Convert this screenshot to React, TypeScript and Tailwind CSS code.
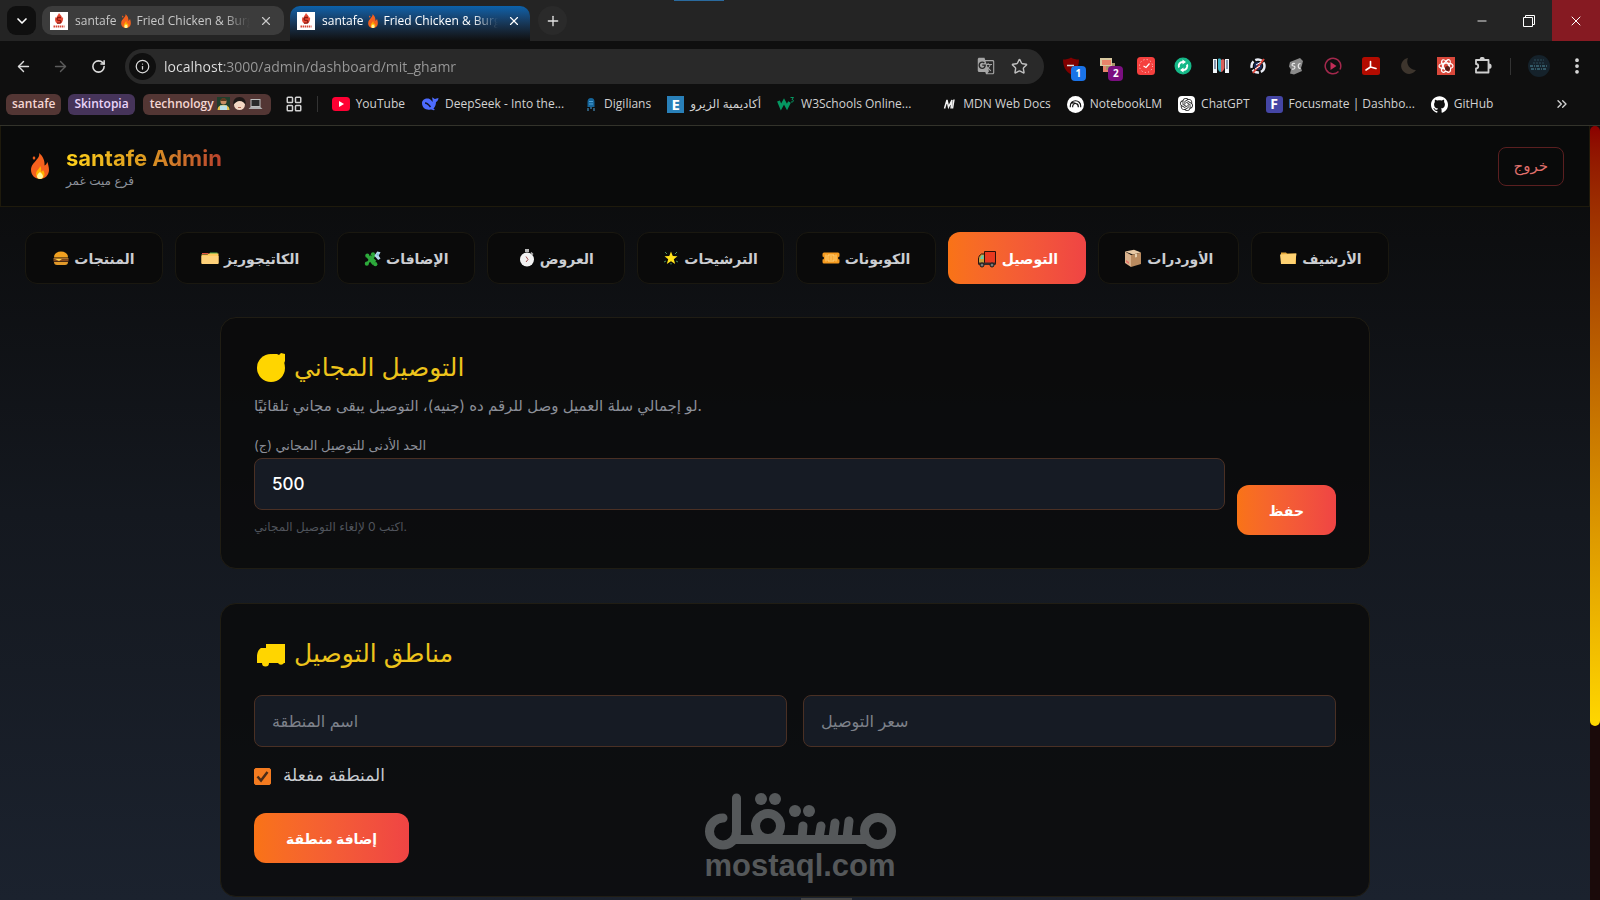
import { useState, type ReactNode } from "react";
import {
  ArrowLeft,
  ArrowRight,
  ChevronDown,
  ChevronsRight,
  EllipsisVertical,
  Info,
  LayoutGrid,
  Minus,
  Plus,
  RotateCw,
  Star,
  X,
} from "lucide-react";
import { SiGithub, SiOpenai } from "react-icons/si";
import { MdGTranslate } from "react-icons/md";

type IconProps = { className?: string };

function Fire({ className }: IconProps) {
  return (
    <svg viewBox="0 0 20 26" className={className} aria-hidden="true">
      <path
        d="M9 0c1 3-1 5-3 7.500C4.500 9.500 1 12 1 17c0 5 4 9 9 9s9-4 9-9c0-3-1-6-1.500-8-1 2-1.500 3-3 3.500C15 8 13 3 9 0z"
        fill="#f4611e"
      />
      <path d="M4 3l1.500 2L4 7 2.500 5z" fill="#f4611e" />
      <path d="M10 13c0 3-4 4-4 8 0 3 2 5 4 5s4.500-2 4.500-5c0-2-1-3-1.500-4-.5 1-1 1.500-2 1.500.5-3 0-4-1-5.500z" fill="#ffb300" />
      <path d="M10 19c-1.500 1.500-3 2.500-3 4.500C7 25 8.500 26 10 26s3-1 3-2.500c0-2-1.500-3-3-4.500z" fill="#fff59d" />
    </svg>
  );
}

function SantafeFavicon() {
  return (
    <svg viewBox="0 0 18 18" className="size-[18px] shrink-0" aria-hidden="true">
      <rect width="18" height="18" fill="#fff" />
      <path d="M9 1c1 2 3 2.500 3 5l1-1c.5 3-.5 5-2 6.500H7C5 10 4.500 8 5.500 5l1 1C6.500 4 8.500 3 9 1z" fill="#e64a35" />
      <path d="M11 5.500H8.500a1.400 1.400 0 0 0 0 2.800h1a1.400 1.400 0 0 1 0 2.800H7" fill="none" stroke="#8c1c13" strokeWidth="1.300" />
      <path d="M3.500 14.500h11" stroke="#d64535" strokeWidth="2" strokeDasharray="1.500 .6" />
    </svg>
  );
}

function Burger() {
  return (
    <svg viewBox="0 0 16 16" className="size-4" aria-hidden="true">
      <path d="M1 7.500C1 3.500 4 1.500 8 1.500s7 2 7 6z" fill="#f0a020" />
      <path d="M.5 8h15v1.500H.5z" fill="#a8702c" />
      <path d="M.5 9.300h15v2.200H.5z" fill="#8a4b1c" />
      <path d="M2 9l4 2 3-2z" fill="#ffd54a" />
      <path d="M1 12h14c0 2-1 3-3 3H4c-2 0-3-1-3-3z" fill="#e39a2a" />
    </svg>
  );
}

function Dividers() {
  return (
    <svg viewBox="0 0 18 16" className="h-4 w-[18px]" aria-hidden="true">
      <path d="M1 3h6l1 1H1z" fill="#e5533d" />
      <path d="M9 2.500h7.500V5H8z" fill="#57b04a" />
      <path d="M.5 4.500h6l1.500-1h9.500V13a1 1 0 0 1-1 1h-15a1 1 0 0 1-1-1z" fill="#ffca5c" />
      <path d="M.5 6h17v7a1 1 0 0 1-1 1h-15a1 1 0 0 1-1-1z" fill="#ffd27a" />
    </svg>
  );
}

function Puzzle() {
  return (
    <svg viewBox="0 0 18 18" className="size-[17px]" aria-hidden="true">
      <g fill="#2eaa3c">
        <path d="M3 8l4-2.500 6 6L9 16z" />
        <circle cx="3.500" cy="6" r="2.200" />
        <circle cx="9.500" cy="4.500" r="2.200" />
        <circle cx="3" cy="14.500" r="2.200" />
        <circle cx="12" cy="15" r="2.200" />
        <path d="M3 5l9 10-1 1-9-9zM10 4L2 14l2 1 8-8z" />
      </g>
      <path d="M11 6l3-4.500 3.500 1-2 3.500 2 3-2.500 1.500z" fill="#b7d9ee" />
      <circle cx="14.500" cy="5" r="1.200" fill="#7fb6d8" />
    </svg>
  );
}

function Stopwatch() {
  return (
    <svg viewBox="0 0 16 18" className="h-[18px] w-4" aria-hidden="true">
      <path d="M6 0h4v3H6z" fill="#b8b8b8" />
      <path d="M12.500 3l2 2-1 1-2-2z" fill="#b8b8b8" />
      <circle cx="8" cy="10.500" r="7" fill="#f2f2f2" />
      <path d="M7 7.500l2 3-2 2.500" fill="none" stroke="#a04a4a" />
    </svg>
  );
}

function GlowStar() {
  return (
    <svg viewBox="0 0 16 16" className="size-4" aria-hidden="true">
      <path d="M2 2l2 2M14 2l-2 2M1 12l2-1M15 12l-2-1M8 14.500V13" stroke="#4a8f5a" />
      <path d="M8 1.500l1.800 4.600 4.700.1-3.700 3 1.400 4.800L8 11.200 3.800 14l1.400-4.800-3.700-3 4.700-.1z" fill="#ffe11a" />
    </svg>
  );
}

function Ticket() {
  return (
    <svg viewBox="0 0 18 12" className="h-3 w-[18px]" aria-hidden="true">
      <path d="M2 .5h14A1.500 1.500 0 0 1 17.500 2v2.500a1.500 1.500 0 0 0 0 3V10a1.500 1.500 0 0 1-1.500 1.500H2A1.500 1.500 0 0 1 .5 10V7.500a1.500 1.500 0 0 0 0-3V2A1.500 1.500 0 0 1 2 .5z" fill="#f59a1f" />
      <path d="M4 2.500v7M14 2.500v7" stroke="#ffd27a" />
      <path d="M6 3h6v6H6zM7.500 5h3M7.500 7h3" fill="none" stroke="#ffd27a" />
    </svg>
  );
}

function Truck() {
  return (
    <svg viewBox="0 0 20 20" className="size-5" aria-hidden="true">
      <path d="M7.500 3.500h11V16h-11z" fill="#e8381f" stroke="#2a0f0a" />
      <path d="M7.500 6H4.500C2.500 7 1.500 9 1.500 11v5h6z" fill="#c9a13a" stroke="#2a0f0a" />
      <path d="M6.500 7.300H4.800L3 11h3.500z" fill="#64c8b0" />
      <path d="M1.500 14.500h17V17h-17z" fill="#3a2a28" />
      <circle cx="5" cy="17" r="2" fill="#777" stroke="#1a1a1a" />
      <circle cx="15" cy="17" r="2" fill="#777" stroke="#1a1a1a" />
    </svg>
  );
}

function Parcel() {
  return (
    <svg viewBox="0 0 18 18" className="size-[18px]" aria-hidden="true">
      <path d="M1 2.500L10 .8l7 2.700-8 2z" fill="#e8c9a4" />
      <path d="M1 2.500l6 3.500v12l-6-4z" fill="#d9b28c" />
      <path d="M7 6l10-2.500V15L7 18z" fill="#b98a5e" />
      <path d="M11 5l2-.5V8l-2 .6z" fill="#e6cfae" />
      <path d="M2 11l3 2v2l-3-2z" fill="#e5736a" />
    </svg>
  );
}

function Folder() {
  return (
    <svg viewBox="0 0 18 16" className="h-4 w-[18px]" aria-hidden="true">
      <path d="M2 2.500h5l1 1h9V14H2z" fill="#e6a93a" />
      <path d="M1 4.500L17.500 3.500 16 14H2z" fill="#ffd272" />
    </svg>
  );
}

function TechFaces() {
  return (
    <svg viewBox="0 0 48 14" className="h-[14px] w-12" aria-hidden="true">
      <rect x="1" width="13" height="13" fill="#1f3d2c" />
      <circle cx="7.500" cy="4.500" r="3" fill="#c98d63" />
      <path d="M4.500 4a3 3 0 0 1 6 0z" fill="#5a3920" />
      <path d="M1.500 13c0-3 2-5 6-5s6 2 6 5z" fill="#e9c04e" />
      <path d="M4 8.500h7V13H4z" fill="#b8e0e8" />
      <circle cx="23.500" cy="7.500" r="5.500" fill="#f3d7c4" />
      <path d="M17.500 8c-1-5 2-8 6-8s7 3 6 8c-1-2-3-4-6-4-2 0-5 2-6 4z" fill="#1d1716" />
      <path d="M22 10.500h3" stroke="#b06a5a" />
      <rect x="35" y="2.500" width="9" height="7" fill="#2a2a2a" stroke="#bdbdbd" />
      <path d="M32.500 12h14l-2-2H34.500z" fill="#b0b0b0" />
    </svg>
  );
}

// Extension icons shown on the right of the address bar
const extensions: { name: string; icon: ReactNode; badge?: string; badgeClass?: string }[] = [
  {
    name: "Ad blocker",
    badge: "1",
    badgeClass: "bg-[#1a73e8]",
    icon: (
      <svg viewBox="0 0 18 18" className="size-[18px]">
        <path d="M9 .5C11 2 14 2.500 17 2.500 17 10 14 14.500 9 17.500 4 14.500 1 10 1 2.500 4 2.500 7 2 9 .5z" fill="#800000" />
        <path d="M5 8.500h7" stroke="#ddd" strokeWidth="1.500" />
      </svg>
    ),
  },
  {
    name: "Page marker",
    badge: "2",
    badgeClass: "bg-[#7b0f80]",
    icon: (
      <svg viewBox="0 0 18 18" className="size-[18px]">
        <path d="M1 1h12v8H1z" fill="#d9c9a0" />
        <path d="M3 3h9v5H3z" fill="#e8836a" />
        <path d="M4 9h5v6H4z" fill="#e8836a" />
        <path d="M7 9h5v4H7zM13 6h3v4h-3z" fill="#a8946a" />
      </svg>
    ),
  },
  {
    name: "Task clock",
    icon: (
      <svg viewBox="0 0 18 18" className="size-[18px]">
        <rect width="18" height="18" rx="3.500" fill="#f5403e" />
        <circle cx="9" cy="9" r="6.500" fill="none" stroke="#ffd9d4" strokeDasharray="1 2.400" />
        <path d="M6.500 9L9 10.500l3.500-4" fill="none" stroke="#fff" strokeWidth="1.200" />
      </svg>
    ),
  },
  {
    name: "Sync",
    icon: (
      <svg viewBox="0 0 18 18" className="size-[18px]">
        <circle cx="9" cy="9" r="8.500" fill="#15b888" />
        <path d="M5 10.500a4 4 0 0 1 4-5.500M13 7.500A4 4 0 0 1 9 13" fill="none" stroke="#fff" strokeWidth="2" />
        <path d="M8.500 2.500L12 5 8.500 7.500zM9.500 15.500L6 13l3.500-2.500z" fill="#fff" />
      </svg>
    ),
  },
  {
    name: "Meeting helper",
    icon: (
      <svg viewBox="0 0 18 18" className="size-[18px]">
        <path d="M1 2h4v14H1zM13 2h4v14h-4z" fill="#f2f6fa" />
        <path d="M3 3v9M15 3v9" stroke="#1d3a6a" />
        <path d="M6 2c2-1 3 0 3 1v12c-2 0-3-2-3-4z" fill="#3fb6c9" />
        <path d="M9 3c1-1 3-1 3.500 0v8c-.5 2-2 4-3.500 4z" fill="#d9605c" />
      </svg>
    ),
  },
  {
    name: "Color picker",
    icon: (
      <svg viewBox="0 0 18 18" className="size-[18px]">
        <circle cx="9" cy="9" r="6.500" fill="none" stroke="#e9ecf5" strokeWidth="2.500" strokeDasharray="7 2" />
        <circle cx="9" cy="9" r="4" fill="#1b2b5c" />
        <path d="M15 2L4 16" stroke="#e0463a" strokeWidth="2" />
        <path d="M7 8l5-3M6 12l5-3" stroke="#fff" />
      </svg>
    ),
  },
  {
    name: "Scribe",
    icon: (
      <svg viewBox="0 0 18 18" className="size-[18px]">
        <path d="M3 5l10-4 3 3-1 4-1 3 1 3-8 3.500-4-1 1-4-2-3z" fill="#8a8a8a" />
        <path d="M8 6.500c-3-1-4 2.500-1.500 2.500S8 13 5 12M13.500 6.500c-3 0-3 5 0 5" fill="none" stroke="#e8e8e8" strokeWidth="1.200" />
      </svg>
    ),
  },
  {
    name: "Video speed",
    icon: (
      <svg viewBox="0 0 18 18" className="size-[18px]">
        <path d="M14.500 14.500A7.800 7.800 0 1 1 16.800 9c0 1.500-.3 2.500-.8 3.500" fill="none" stroke="#a3284c" strokeWidth="1.500" />
        <path d="M6.500 5l6 4-6 4z" fill="#c22d57" />
      </svg>
    ),
  },
  {
    name: "PDF reader",
    icon: (
      <svg viewBox="0 0 18 18" className="size-[18px]">
        <rect width="18" height="18" rx="2.500" fill="#b30b00" />
        <path d="M4 13l4.500-3V4.500M8.500 4.500V10l5.500 1.500M8.500 10l5.500 1.500" fill="none" stroke="#fff" strokeWidth="1.600" strokeLinecap="round" />
      </svg>
    ),
  },
  {
    name: "Dark mode",
    icon: (
      <svg viewBox="0 0 18 18" className="size-[18px]">
        <path d="M9 1a8 8 0 1 0 8 12A8.500 8.500 0 0 1 9 1z" fill="#3d352d" />
      </svg>
    ),
  },
  {
    name: "React tools",
    icon: (
      <svg viewBox="0 0 18 18" className="size-[18px]">
        <rect width="18" height="18" fill="#d9483b" />
        <g fill="none" stroke="#fff" strokeWidth="1.200">
          <ellipse cx="9" cy="9" rx="7" ry="2.800" />
          <ellipse cx="9" cy="9" rx="7" ry="2.800" transform="rotate(60 9 9)" />
          <ellipse cx="9" cy="9" rx="7" ry="2.800" transform="rotate(120 9 9)" />
        </g>
        <circle cx="10.500" cy="11.500" r="2.500" fill="#5a1c16" />
      </svg>
    ),
  },
  {
    name: "Extensions",
    icon: (
      <svg viewBox="0 0 18 18" className="size-[18px]" fill="none" stroke="#cfcfcf" strokeWidth="1.800" strokeLinejoin="round">
        <path d="M2 3h12.500v12.500H2v-4a2.200 2.200 0 0 0 0-4.500z" />
        <path d="M6.500 2.500a1.700 1.700 0 0 1 3.400 0zM15 7.500a1.700 1.700 0 0 1 0 3.400z" fill="#cfcfcf" />
      </svg>
    ),
  },
];

const bookmarks: { label: string; icon: ReactNode; className?: string }[] = [
  {
    label: "YouTube",
    icon: (
      <svg viewBox="0 0 18 14" className="h-[14px] w-[18px]">
        <rect width="18" height="14" rx="3.500" fill="#ff0033" />
        <path d="M7 4l5 3-5 3z" fill="#fff" />
      </svg>
    ),
  },
  {
    label: "DeepSeek - Into the...",
    icon: (
      <svg viewBox="0 0 18 16" className="h-4 w-[18px]">
        <path
          d="M1 7c0-3 3-5 6.500-4.500 1.500.2 3 2 4 3.500.3-1.500 0-3-.5-4.500 1.500.3 2 1.500 3 1.500s2-1 3.500-1c-.3 2-1 3.500-2.500 4 0 3-1 5-2.500 6.500l1.500 1.500c-2 .5-3-.5-4.500-.5C5 14.500 1 12 1 7z"
          fill="#4d6bfe"
        />
        <path d="M4 7c2 0 4 2 5.500 4" fill="none" stroke="#12142a" strokeWidth="1.500" />
      </svg>
    ),
  },
  {
    label: "Digilians",
    className: "ml-1",
    icon: (
      <svg viewBox="0 0 14 16" className="h-4 w-[14px]">
        <path d="M3.500 6a3.500 4 0 0 1 7 0v5h-7z" fill="#15659a" />
        <path d="M4 12v3M7 11v2M10 12v3M5 5.500h4M5 8h4" stroke="#4fa3d8" strokeWidth="1" />
      </svg>
    ),
  },
  {
    label: "أكاديمية الزيرو",
    icon: (
      <span className="flex size-[17px] items-center justify-center bg-[#2980b9] text-[15px] leading-none font-bold text-white">E</span>
    ),
  },
  {
    label: "W3Schools Online...",
    icon: (
      <svg viewBox="0 0 18 16" className="h-4 w-[18px]">
        <path d="M1.500 5l2.500 6 3-5.500 3 5.500 2.500-5" fill="none" stroke="#059862" strokeWidth="3" />
        <path d="M13.500 1.500h3l-1.500 2c2 0 2 3-1 2.500" fill="none" stroke="#059862" />
      </svg>
    ),
  },
  {
    label: "MDN Web Docs",
    className: "ml-[14px]",
    icon: (
      <svg viewBox="0 0 16 16" className="size-4">
        <path d="M3.500 12.500L6 4l1.500 7L11 4l-1 8.500M13 3.500l-1.500 9" fill="none" stroke="#f2f2f2" strokeWidth="1.500" />
      </svg>
    ),
  },
  {
    label: "NotebookLM",
    icon: (
      <svg viewBox="0 0 18 18" className="size-[17px]">
        <circle cx="9" cy="9" r="9" fill="#fff" />
        <path d="M3.500 12V10.500a5.500 5.500 0 0 1 11 0V12M6 12v-1a3 3 0 0 1 6 0v1M4.500 7.500c4-1 7.500 1 7.500 4.500" fill="none" stroke="#111" strokeWidth="1.200" />
      </svg>
    ),
  },
  {
    label: "ChatGPT",
    icon: (
      <span className="flex size-[17px] items-center justify-center rounded-[4px] bg-white text-[#222]">
        <SiOpenai className="size-[13px]" />
      </span>
    ),
  },
  {
    label: "Focusmate | Dashbo...",
    icon: (
      <span className="flex size-[17px] items-center justify-center rounded-[3px] bg-[#4546a5] text-[14px] leading-none font-bold text-white">F</span>
    ),
  },
  { label: "GitHub", icon: <SiGithub className="size-[17px] text-white" /> },
];

const sections = [
  { id: "products", label: "المنتجات", icon: <Burger /> },
  { id: "categories", label: "الكاتيجوريز", icon: <Dividers /> },
  { id: "addons", label: "الإضافات", icon: <Puzzle /> },
  { id: "offers", label: "العروض", icon: <Stopwatch /> },
  { id: "picks", label: "الترشيحات", icon: <GlowStar /> },
  { id: "coupons", label: "الكوبونات", icon: <Ticket /> },
  { id: "delivery", label: "التوصيل", icon: <Truck /> },
  { id: "orders", label: "الأوردرات", icon: <Parcel /> },
  { id: "archive", label: "الأرشيف", icon: <Folder /> },
];

function BrowserTab({ active = false }: { active?: boolean }) {
  return (
    <div
      className={
        active
          ? "flex h-[35px] w-[240px] items-center rounded-t-[10px] bg-linear-to-b from-[#0a62ab] to-[#0f0f0f] pr-1.5 pb-1.5 pl-[7px] text-white"
          : "mb-1.5 flex h-[29px] w-[242px] items-center rounded-[10px] bg-[#3c3c3c] pr-2 pl-2 text-[#c8c8c8]"
      }
    >
      <SantafeFavicon />
      <a href="#tab" className="ml-[7px] flex min-w-0 flex-1 items-center mask-r-from-85% text-[12px] whitespace-nowrap">
        santafe
        <Fire className="mx-1 h-[14px] w-3 shrink-0" />
        Fried Chicken &amp; Burg
      </a>
      <button type="button" aria-label="Close tab" className="ml-1.5 flex size-5 items-center justify-center">
        <X className="size-[14px]" />
      </button>
    </div>
  );
}

function BrowserChrome() {
  return (
    <div className="shrink-0 bg-[#0f0f0f] font-['Open_Sans','DejaVu_Sans',sans-serif]">
      <div className="relative flex h-[41px] items-end bg-[#242424] pl-[7px]">
        <span className="absolute top-0 left-[674px] h-px w-[50px] bg-[#2a6a9e]" />
        <button type="button" aria-label="Search tabs" className="mb-1.5 flex size-[29px] items-center justify-center rounded-[9px] bg-[#0f0f0f] text-white">
          <ChevronDown className="size-4" strokeWidth={2.500} />
        </button>
        <div className="ml-1.5 flex items-end gap-1.5">
          <BrowserTab />
          <BrowserTab active />
        </div>
        <button type="button" aria-label="New tab" className="mb-1.5 ml-2 flex size-[29px] items-center justify-center rounded-full bg-[#2a2a2a] text-[#e3e3e3]">
          <Plus className="size-4" />
        </button>
        <div className="ml-auto flex self-stretch text-white">
          <button type="button" aria-label="Minimize" className="flex w-[47px] items-center justify-center">
            <Minus className="size-[14px]" strokeWidth={1.500} />
          </button>
          <button type="button" aria-label="Restore" className="flex w-[47px] items-center justify-center">
            <svg viewBox="0 0 12 12" className="size-3" fill="none" stroke="currentColor">
              <path d="M.5 2.500h9v9h-9zM2.500 2.500v-2h9v9h-2" />
            </svg>
          </button>
          <button type="button" aria-label="Close window" className="flex w-12 items-center justify-center bg-[#861a22]">
            <X className="size-4" strokeWidth={1.500} />
          </button>
        </div>
      </div>

      <div className="flex h-[50px] items-center text-[#dcdcdc]">
        <button type="button" aria-label="Back" className="flex w-[46px] justify-center">
          <ArrowLeft className="size-[17px]" />
        </button>
        <button type="button" aria-label="Forward" className="flex w-[28px] justify-center text-[#5c5c5c]">
          <ArrowRight className="size-[17px]" />
        </button>
        <button type="button" aria-label="Reload" className="flex w-[48px] justify-center">
          <RotateCw className="size-[15px]" strokeWidth={2.500} />
        </button>
        <div className="ml-[3px] flex h-[35px] flex-1 items-center rounded-full bg-[#292929] pr-4 pl-1">
          <span className="flex size-[27px] items-center justify-center rounded-full bg-[#0f0f0f]">
            <Info className="size-[15px]" />
          </span>
          <input
            aria-label="Address"
            defaultValue="localhost:3000/admin/dashboard/mit_ghamr"
            className="ml-2 flex-1 bg-[linear-gradient(90deg,#e3e3e3_60px,#9a9a9a_60px)] bg-clip-text text-[14px] text-transparent outline-none"
          />
          <MdGTranslate className="size-[18px] text-[#a5a5a5]" />
          <Star className="ml-4 size-[17px] text-[#c0c0c0]" />
        </div>
        <div className="ml-2 grid w-[450px] grid-cols-12 justify-items-center">
          {extensions.map((ext) => (
            <button key={ext.name} type="button" aria-label={ext.name} className="relative flex size-5 items-center justify-center">
              {ext.icon}
              {ext.badge ? (
                <span className={`absolute top-2.5 left-2.5 flex size-[15px] items-center justify-center rounded-[4px] text-[10px] font-bold text-white ${ext.badgeClass}`}>
                  {ext.badge}
                </span>
              ) : null}
            </button>
          ))}
        </div>
        <span className="ml-2 h-[17px] w-px bg-[#333]" />
        <button type="button" aria-label="Profile" className="ml-[17px]">
          <svg viewBox="0 0 22 22" className="size-[22px]">
            <circle cx="11" cy="11" r="11" fill="#15222b" />
            <path d="M6 5h10M5 8h12" stroke="#2c4a58" strokeDasharray="2 1" />
            <path d="M2 11h17M3 14h16" stroke="#3c6a78" strokeWidth="1.500" strokeDasharray="3 1 1 1" />
          </svg>
        </button>
        <button type="button" aria-label="Menu" className="mr-[13px] ml-[17px]">
          <EllipsisVertical className="size-5" strokeWidth={2.500} />
        </button>
      </div>

      <div className="flex h-[35px] items-center border-b border-[#33332b] pb-2 pl-1.5 text-[12px] text-[#d2d2d2]">
        <button type="button" className="h-[21px] rounded-[6px] bg-[#533634] px-1.5 font-semibold text-[#f5d5d2]">santafe</button>
        <button type="button" className="ml-[7px] h-[21px] rounded-[6px] bg-[#46345a] px-1.5 font-semibold text-[#ead4fb]">Skintopia</button>
        <button type="button" className="ml-2 flex h-[21px] items-center gap-0.5 rounded-[6px] bg-[#533634] px-[7px] font-semibold text-[#f5d5d2]">
          technology
          <TechFaces />
        </button>
        <button type="button" aria-label="Apps" className="ml-[14px]">
          <LayoutGrid className="size-[18px]" />
        </button>
        <span className="mx-[14px] h-4 w-px bg-[#333]" />
        <nav className="flex items-center gap-4">
          {bookmarks.map((bookmark) => (
            <a key={bookmark.label} href="#bookmark" className={`flex items-center gap-1.5 whitespace-nowrap ${bookmark.className ?? ""}`}>
              {bookmark.icon}
              {bookmark.label}
            </a>
          ))}
        </nav>
        <button type="button" aria-label="More bookmarks" className="mr-[30px] ml-auto">
          <ChevronsRight className="size-4" />
        </button>
      </div>
    </div>
  );
}

type TextFieldProps = {
  label: string;
  defaultValue?: string;
};

function TextField({ label, defaultValue }: TextFieldProps) {
  return (
    <input
      aria-label={label}
      placeholder={label}
      defaultValue={defaultValue}
      className="h-[52px] w-full rounded-lg border border-[#4a3024] bg-[#161b24] px-[17px] text-[16px] text-white outline-none placeholder:text-[#7d818a]"
    />
  );
}

function PrimaryButton({ children }: { children: ReactNode }) {
  return (
    <button type="button" className="h-[50px] shrink-0 rounded-xl bg-linear-to-r from-[#f97316] to-[#ef4444] px-8 text-[14px] font-bold text-white">
      {children}
    </button>
  );
}

function Card({ children }: { children: ReactNode }) {
  return <section className="rounded-2xl border border-[#201d14] bg-[#0a0a0a]/80 p-[33px]">{children}</section>;
}

function CardTitle({ icon, children }: { icon: ReactNode; children: ReactNode }) {
  return (
    <h2 className="flex h-8 items-center gap-1.5 text-[25px] leading-8 text-[#edc31b]">
      {icon}
      {children}
    </h2>
  );
}

export default function App() {
  const [current, setCurrent] = useState("delivery");

  return (
    <div className="flex h-screen flex-col overflow-hidden bg-[#0a0a0a]">
      <BrowserChrome />

      <div className="flex min-h-0 flex-1 font-['Inter','DejaVu_Sans',sans-serif]">
        <div className="relative min-w-0 flex-1 overflow-hidden bg-linear-to-b from-[#0a0a0a] via-[#14181f] to-[#1b222e]">
          <header className="flex h-[81px] items-center border border-t-0 border-[#1e1a0c] bg-[#090a0a] px-[25px]">
            <Fire className="ml-1 h-[26px] w-5" />
            <div className="ml-4 pt-1">
              <h1 className="w-fit bg-linear-to-r from-[#ffd21a] via-[#dc9a20] to-[#b8402c] bg-clip-text text-[22px] leading-[26px] font-bold text-transparent">
                santafe Admin
              </h1>
              <p className="text-[12px] leading-5 text-[#8d929b]">فرع ميت غمر</p>
            </div>
            <button type="button" className="ml-auto h-[39px] rounded-lg border border-[#5a1f20] px-[15px] text-[15px] text-[#e0706c]">
              خروج
            </button>
          </header>

          <nav className="flex gap-3 px-[25px] pt-[25px]">
            {sections.map((section) => (
              <button
                key={section.id}
                type="button"
                onClick={() => setCurrent(section.id)}
                className={`flex h-[52px] min-w-[138px] items-center justify-center gap-[5px] rounded-xl border px-[25px] text-[14px] font-bold whitespace-nowrap ${
                  section.id === current
                    ? "border-transparent bg-linear-to-r from-[#f97316] to-[#ef4444] bg-origin-border text-white"
                    : "border-[#1a1810] bg-[#0a0a0a] text-[#ccced2]"
                }`}
              >
                {section.icon}
                {section.label}
              </button>
            ))}
          </nav>

          <main className="mx-auto mt-[33px] flex max-w-[1150px] flex-col gap-[34px]">
            <Card>
              <CardTitle
                icon={
                  <svg viewBox="0 0 34 34" className="size-[34px]" fill="#ffd500" aria-hidden="true">
                    <circle cx="17" cy="18" r="14" />
                    <path d="M18 4h5l2 1 2-2 4 1v7l-2 5-9-4z" />
                  </svg>
                }
              >
                التوصيل المجاني
              </CardTitle>
              <p className="mt-[11px] text-[15px] leading-6 text-[#8b8f98]">
                لو إجمالي سلة العميل وصل للرقم ده (جنيه)، التوصيل يبقى مجاني تلقائيًا.
              </p>
              <div className="mt-4 flex items-end gap-3">
                <div className="flex-1">
                  <label htmlFor="free-min" className="block h-6 text-[13px] leading-[22px] text-[#8b8f98]">
                    الحد الأدنى للتوصيل المجاني (ج)
                  </label>
                  <input
                    id="free-min"
                    defaultValue="500"
                    className="h-[52px] w-full rounded-lg border border-[#4a3024] bg-[#161b24] px-[17px] text-[17px] font-medium text-white outline-none"
                  />
                  <p className="mt-2 text-[12px] leading-[17px] text-[#50545c]">اكتب 0 لإلغاء التوصيل المجاني.</p>
                </div>
                <PrimaryButton>حفظ</PrimaryButton>
              </div>
            </Card>

            <Card>
              <CardTitle
                icon={
                  <svg viewBox="0 0 34 34" className="size-[34px]" fill="#ffd500" aria-hidden="true">
                    <path d="M12 8h19v19h-1a3.500 3.500 0 0 1-6 0h-9a3.500 3.500 0 0 1-7 0H3v-6c0-5 2-8 4-9h5z" />
                  </svg>
                }
              >
                مناطق التوصيل
              </CardTitle>
              <div className="mt-[26px] grid grid-cols-2 gap-4">
                <TextField label="اسم المنطقة" />
                <TextField label="سعر التوصيل" />
              </div>
              <label className="mt-4 flex h-[26px] items-center gap-3 text-[17px] text-[#c9ccd1]">
                <span className="grid">
                  <input
                    type="checkbox"
                    defaultChecked
                    className="peer col-start-1 row-start-1 size-[17px] appearance-none rounded-[2px] border border-[#f47b20] checked:bg-[#f47b20]"
                  />
                  <svg viewBox="0 0 17 17" className="pointer-events-none invisible col-start-1 row-start-1 size-[17px] peer-checked:visible">
                    <path d="M3.500 8.500l3.500 4 6.500-8.500" fill="none" stroke="#4a2c18" strokeWidth="2.500" />
                  </svg>
                </span>
                المنطقة مفعلة
              </label>
              <div className="mt-6">
                <PrimaryButton>إضافة منطقة</PrimaryButton>
              </div>
            </Card>
          </main>

          {/* Watermark sits over the page */}
          <div className="pointer-events-none absolute inset-x-0 bottom-[18px] flex flex-col items-center pl-[10px] text-[#55585a]">
            <svg viewBox="0 0 192 57" className="h-[57px] w-[192px]" fill="none" stroke="currentColor" strokeWidth="9" strokeLinecap="round" role="img" aria-label="مستقل">
              <circle cx="174" cy="38" r="13.500" />
              <circle cx="64" cy="33" r="12.500" />
              <path d="M19 25a13.500 13.500 0 1 0 13.500 13.500V5M30 46.500h132M98 45l1-12M115 45l2-12M129 45l2-15M143 45l2-17" />
              <g fill="currentColor" stroke="none">
                <circle cx="57" cy="6" r="6" />
                <circle cx="71" cy="6" r="6" />
                <circle cx="91" cy="18" r="6" />
                <circle cx="105" cy="18" r="6" />
              </g>
            </svg>
            <p className="font-['Liberation_Sans',sans-serif] text-[31px] leading-8 font-bold">mostaql.com</p>
          </div>
          <span className="absolute bottom-0 left-[801px] h-0.5 w-[51px] bg-[#444]" />
        </div>

        <div className="w-2.5 shrink-0 bg-[#1a0a0a]">
          <div className="h-[600px] rounded-full bg-linear-to-b from-[#8b0000] to-[#ffd700]" />
        </div>
      </div>
    </div>
  );
}
